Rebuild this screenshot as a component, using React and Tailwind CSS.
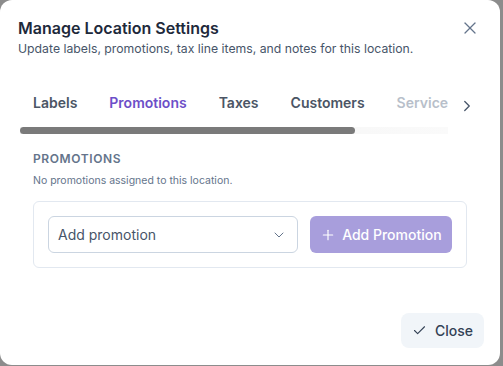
import { X, ChevronRight, ChevronDown, Plus, Check } from 'lucide-react';

const tabs = ['Labels', 'Promotions', 'Taxes', 'Customers', 'Service'];

export default function App() {
  return (
    <div className="w-[503px] h-[366px] bg-[#8c8c8c] overflow-hidden" style={{ fontFamily: 'Inter, "Noto Sans", sans-serif' }}>
      <div className="w-[500px] h-[365px] bg-white rounded-xl flex flex-col">
        <div className="flex justify-between pl-[18px] pr-[20px] pt-[16px]">
          <div>
            <h2 className="text-[16px] leading-6 font-semibold text-[#1e293b]">Manage Location Settings</h2>
            <p className="text-[12.25px] leading-5 text-[#475569] mt-[-1px]">
              Update labels, promotions, tax line items, and notes for this location.
            </p>
          </div>
          <button className="mt-[2px] h-5 text-[#64748b]">
            <X size={20} strokeWidth={1.5} />
          </button>
        </div>

        <div className="flex items-start pl-[20px] pr-[24px] mt-[30px]">
          <div className="w-[428px] overflow-hidden">
            <div className="flex gap-[32px] pl-[13px] h-[26px] items-center whitespace-nowrap">
              {tabs.map((t) => (
                <span
                  key={t}
                  className={`text-[14px] font-semibold ${
                    t === 'Promotions'
                      ? 'text-[#6d4fc8]'
                      : t === 'Service'
                      ? 'text-[#b8bfca]'
                      : 'text-[#4b5565]'
                  }`}
                >
                  {t}
                </span>
              ))}
            </div>
            <div className="mt-[12px] h-[7px] flex bg-gradient-to-r from-[#f0f0f0] to-[#fafafa]">
              <div className="w-[335px] h-[7px] rounded-full bg-[#7a7a7a]" />
            </div>
          </div>
          <ChevronRight size={18} strokeWidth={1.75} className="ml-[10px] mt-[8px] text-[#475569]" />
        </div>

        <div className="px-[33px] mt-[17px]">
          <div className="text-[12px] leading-4 font-semibold tracking-wider text-[#64748b]">PROMOTIONS</div>
          <p className="text-[10.5px] leading-4 text-[#64748b] mt-[6px]">No promotions assigned to this location.</p>

          <div className="mt-[12px] h-[67px] border border-[#e2e8f0] rounded-md flex items-center gap-[12px] px-[14px]">
            <div className="w-[251px] h-[37px] border border-[#cbd5e1] rounded-md flex items-center justify-between pl-[9px] pr-[10px]">
              <span className="text-[14px] text-[#475569]">Add promotion</span>
              <ChevronDown size={16} strokeWidth={1.5} className="text-[#64748b]" />
            </div>
            <button className="w-[143px] h-[37px] rounded-md bg-[#a89edc] text-white text-[14px] font-medium flex items-center justify-center gap-[6px]">
              <Plus size={16} strokeWidth={1.75} />
              Add Promotion
            </button>
          </div>
        </div>

        <div className="flex justify-end pr-[16px] mt-auto mb-[17px]">
          <button className="w-[83px] h-[35px] rounded-lg bg-[#f1f5f9] text-[#334155] text-[14px] font-medium flex items-center justify-center gap-[8px]">
            <Check size={15} strokeWidth={1.75} />
            Close
          </button>
        </div>
      </div>
    </div>
  );
}
